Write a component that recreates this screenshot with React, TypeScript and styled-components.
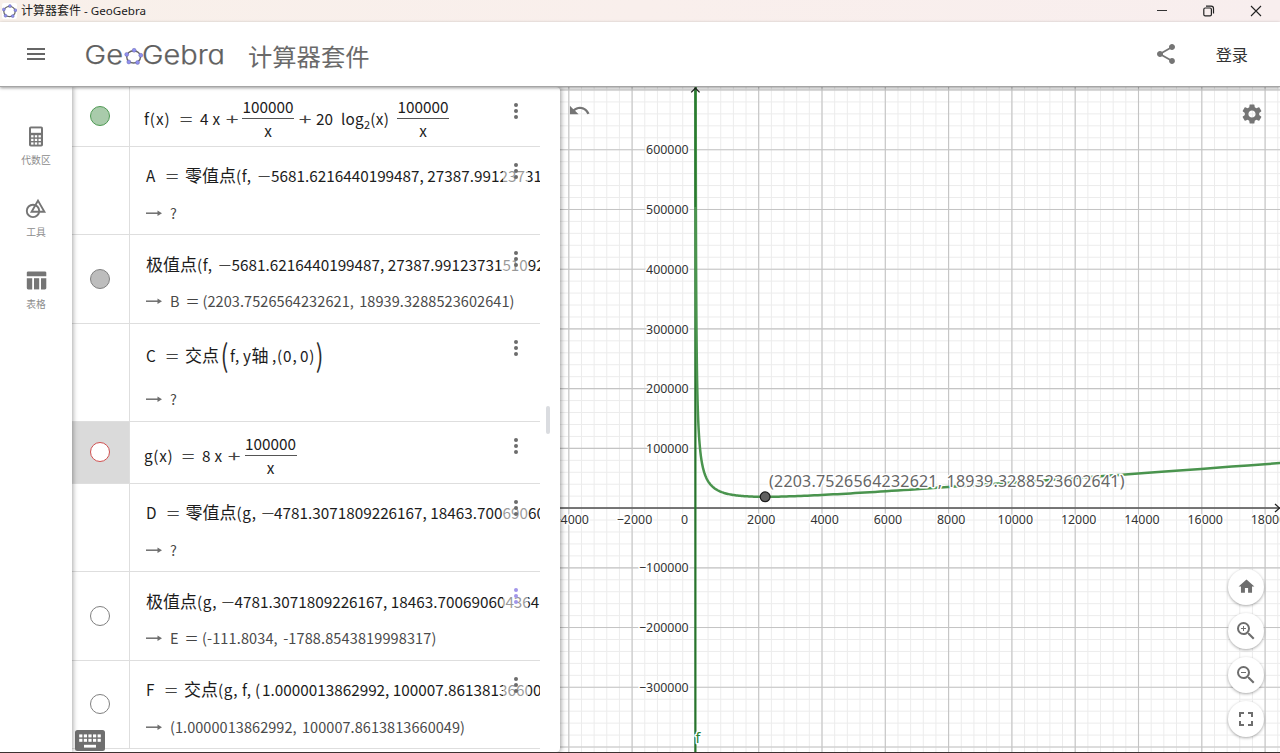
import React from "react";
import styled, { createGlobalStyle } from "styled-components";
import {
  MdFullscreen,
  MdHome,
  MdMenu,
  MdSettings,
  MdShare,
  MdUndo,
  MdZoomIn,
  MdZoomOut,
} from "react-icons/md";

const Global = createGlobalStyle`
  * { box-sizing: border-box; }
  html, body { margin: 0; padding: 0; overflow: hidden; background: #fff; }
`;

const UI = `"Noto Sans", "Noto Sans CJK SC", sans-serif`;
const MATH = `"Noto Sans CJK SC", "Noto Sans", sans-serif`;

const Window = styled.div`
  width: 1280px;
  height: 753px;
  display: flex;
  flex-direction: column;
  font-family: ${UI};
  background: #fff;
  overflow: hidden;
  border-bottom: 1px solid #3b3130;
`;

const TitleBar = styled.div`
  height: 22px;
  flex: none;
  display: flex;
  align-items: center;
  padding-left: 2px;
  background: linear-gradient(90deg, #f8f0ea, #f9efec 50%, #f8eeee);
  color: #1b1b1b;
`;

const AppIcon = styled.span`
  width: 15px;
  height: 16px;
  border-radius: 2px;
  background: #fff;
  display: flex;
  align-items: center;
  justify-content: center;
`;

const TitleText = styled.span`
  margin: 0 0 1px 4px;
  font-size: 11.6px;
  line-height: 16px;
`;

const TitleCjk = styled.span`
  font-family: "Noto Sans CJK SC", sans-serif;
  font-size: 12px;
`;

const WindowControls = styled.div`
  margin-left: auto;
  margin-right: 18px;
  display: flex;
  gap: 35px;
`;

const Header = styled.header`
  height: 65px;
  flex: none;
  display: flex;
  align-items: center;
  padding: 0 32px 0 24px;
  background: #fff;
  border-bottom: 1px solid #a5a5a5;
  box-shadow: 0 1px 3px rgba(0, 0, 0, 0.4);
  position: relative;
  z-index: 5;
  color: #666;
`;

const Logo = styled.svg`
  margin: 1px 0 0 37px;
`;

const LogoText = styled.text`
  font: 300 26px Inter, sans-serif;
  font-feature-settings: "cv11";
  fill: #606060;
  stroke: #606060;
  stroke-width: 0.25px;
`;

const Subtitle = styled.h1`
  margin: 4px 0 0 22px;
  font: 400 24.3px/32px "Noto Sans CJK SC", sans-serif;
  color: #6a6a6a;
`;

const ShareButton = styled.span`
  margin-left: auto;
  display: flex;
  color: #757575;
`;

const SignIn = styled.span`
  margin: 0 0 1px 38px;
  font: 400 16.2px/24px "Noto Sans CJK SC", sans-serif;
  color: #333;
`;

const Body = styled.div`
  flex: 1;
  min-height: 0;
  display: flex;
`;

const Nav = styled.nav`
  width: 72px;
  flex: none;
  padding-top: 35px;
  display: flex;
  flex-direction: column;
  position: relative;
  z-index: 3;
  background: #fff;
  box-shadow: 1px 0 5px rgba(0, 0, 0, 0.35);
`;

const NavItem = styled.div`
  height: 72px;
  display: flex;
  flex-direction: column;
  align-items: center;
  color: #757575;
`;

const NavIcon = styled.svg`
  margin-top: 2px;
  display: block;
`;

const NavLabel = styled.span`
  margin-top: 5px;
  font: 400 9.8px/14px "Noto Sans CJK SC", sans-serif;
  color: #8c8c8c;
`;

const Panel = styled.section`
  width: 488px;
  flex: none;
  display: flex;
  position: relative;
  z-index: 2;
  background: #fff;
  border-radius: 0 4px 4px 0;
  box-shadow: 1px 0 5px rgba(0, 0, 0, 0.4);
`;

const Rows = styled.div`
  width: 468px;
  overflow: hidden;
`;

const ScrollTrack = styled.div`
  flex: 1;
  padding: 319px 0 0 6px;
`;

const ScrollThumb = styled.div`
  width: 4px;
  height: 28px;
  border-radius: 2px;
  background: #dadce0;
`;

const Row = styled.div<{ $h: number }>`
  height: ${(p) => p.$h}px;
  display: flex;
  position: relative;
  border-bottom: 1px solid #dedede;
`;

const Gutter = styled.div<{ $active?: boolean }>`
  width: 58px;
  flex: none;
  display: flex;
  align-items: center;
  justify-content: center;
  padding: 0 2px 0 0;
  border-right: 1px solid #dedede;
  background: ${(p) => (p.$active ? "#dadada" : "transparent")};
`;

const Marble = styled.span<{ $fill: string; $line: string }>`
  width: 20px;
  height: 20px;
  margin-bottom: 1px;
  border-radius: 50%;
  border: 1px solid ${(p) => p.$line};
  background: ${(p) => p.$fill};
`;

const Content = styled.div<{ $top: number; $indent?: number }>`
  flex: 1;
  min-width: 0;
  overflow: hidden;
  padding: ${(p) => p.$top}px 0 0 ${(p) => p.$indent ?? 16}px;
`;

const Expression = styled.div<{ $h?: number }>`
  height: ${(p) => p.$h ?? 24}px;
  display: flex;
  align-items: center;
  white-space: nowrap;
  font: 400 15.3px/24px ${MATH};
  color: #1c1c1c;
`;

const Tok = styled.span<{ $w?: number; $ls?: number }>`
  flex: none;
  white-space: pre;
  width: ${(p) => (p.$w ? `${p.$w}px` : "auto")};
  letter-spacing: ${(p) => p.$ls ?? 0}px;
`;

const Op = styled.span<{ $w: number; $after?: number }>`
  flex: none;
  display: inline-flex;
  justify-content: center;
  width: ${(p) => p.$w}px;
  margin-right: ${(p) => p.$after ?? 0}px;
  transform: scaleX(1.5);
  color: #444;
`;

const Cjk = styled.span`
  flex: none;
  font-size: 17px;
`;

const BigParen = styled.span<{ $w: number }>`
  flex: none;
  width: ${(p) => p.$w}px;
  display: inline-flex;
  justify-content: center;
  font-size: 18px;
  line-height: 24px;
  transform: scale(1.25, 1.7);
  transform-origin: 50% 58%;
  color: #2c2c2c;
`;

const Sub = styled.sub`
  font-size: 11px;
  line-height: 0;
`;

const Fraction = styled.span`
  flex: none;
  width: 52px;
  display: flex;
  flex-direction: column;
  align-items: center;
  line-height: 23px;
`;

const Numerator = styled.span`
  width: 100%;
  height: 24px;
  text-align: center;
  border-bottom: 1px solid #555;
`;

const Denominator = styled.span`
  height: 23px;
`;

const Result = styled.div<{ $mt: number }>`
  margin-top: ${(p) => p.$mt}px;
  display: flex;
  align-items: center;
  white-space: pre;
  font: 400 14.5px/22px ${MATH};
  letter-spacing: 0.06px;
  word-spacing: 2px;
  color: #4a4a4a;
`;

const ArrowMark = styled.svg`
  flex: none;
  margin-right: 8px;
`;

const More = styled.span<{ $accent?: boolean; $veil?: boolean }>`
  position: absolute;
  top: 8px;
  right: 12px;
  width: 25px;
  height: 32px;
  display: flex;
  flex-direction: column;
  align-items: center;
  justify-content: center;
  gap: 2px;
  color: ${(p) => (p.$accent ? "#a296ea" : "#6c6c6c")};
  background: ${(p) => (p.$veil ? "rgba(255,255,255,0.55)" : "transparent")};
`;

const Dot = styled.i`
  width: 4px;
  height: 4px;
  border-radius: 50%;
  background: currentColor;
`;

const KeyboardButton = styled.span`
  position: absolute;
  left: 3px;
  bottom: 1px;
  display: flex;
`;

const GraphArea = styled.section`
  flex: 1;
  min-width: 0;
  position: relative;
`;

const Plot = styled.svg`
  display: block;
  font-family: ${UI};
`;

const UndoButton = styled.span`
  position: absolute;
  left: 8px;
  top: 12px;
  display: flex;
  color: #757575;
`;

const SettingsButton = styled.span`
  position: absolute;
  right: 16px;
  top: 15px;
  display: flex;
  color: #757575;
`;

const ZoomStack = styled.div`
  position: absolute;
  right: 16px;
  top: 481.5px;
  display: flex;
  flex-direction: column;
  gap: 8px;
`;

const Fab = styled.span`
  width: 36px;
  height: 36px;
  border-radius: 50%;
  background: #fff;
  display: flex;
  align-items: center;
  justify-content: center;
  color: #6e6e6e;
  box-shadow: 0 1px 3px rgba(0, 0, 0, 0.35);
`;

function Pentagon({ r, dot, stroke }: { r: number; dot: number; stroke: number }) {
  const pts = [-86, -14, 58, 130, 202].map((a) => {
    const t = (a * Math.PI) / 180;
    return [Math.cos(t) * r * 1.06, Math.sin(t) * r * 0.94];
  });
  return (
    <g>
      <ellipse rx={r * 0.98} ry={r * 0.88} fill="none" stroke="#666" strokeWidth={stroke} />
      {pts.map(([x, y], i) => (
        <circle key={i} cx={x} cy={y} r={dot} fill="#8f8ff0" stroke="#5a5a9a" strokeWidth={0.4} />
      ))}
    </g>
  );
}

function Arrow() {
  return (
    <ArrowMark width="16" height="8" viewBox="0 0 16 8">
      <path d="M0 4.2H13" stroke="#6e6e6e" strokeWidth="1.5" />
      <path d="M11.5 1.4L16 4.2L11.5 7Z" fill="#6e6e6e" />
    </ArrowMark>
  );
}

function Frac() {
  return (
    <Fraction>
      <Numerator>100000</Numerator>
      <Denominator>x</Denominator>
    </Fraction>
  );
}

type RowProps = {
  h: number;
  top: number;
  indent?: number;
  active?: boolean;
  marble?: [string, string];
  accent?: boolean;
  veil?: boolean;
  children: React.ReactNode;
};

function AlgebraRow({ h, top, indent, active, marble, accent, veil, children }: RowProps) {
  return (
    <Row $h={h}>
      <Gutter $active={active}>{marble && <Marble $fill={marble[0]} $line={marble[1]} />}</Gutter>
      <Content $top={top} $indent={indent}>
        {children}
      </Content>
      <More $accent={accent} $veil={veil}>
        <Dot />
        <Dot />
        <Dot />
      </More>
    </Row>
  );
}

/* Graph coordinates: the plot starts at the panel edge and below the header. */
const OX = 135.4;
const OY = 421.1;
const UX = 63.3 / 2000;
const UY = 59.73 / 100000;
const sx = (x: number) => OX + x * UX;
const sy = (y: number) => OY - y * UY;
const f = (x: number) => 4 * x + 100000 / x + (20 * Math.log2(x) * 100000) / x;

function curvePath() {
  const pts: string[] = [];
  for (let x = 5; x < 19500; x *= 1.03) pts.push(`${sx(x).toFixed(2)},${sy(f(x)).toFixed(2)}`);
  return `M${pts.join("L")}`;
}

const range = (a: number, b: number) => Array.from({ length: b - a + 1 }, (_, i) => a + i);

function Graph() {
  return (
    <Plot width="720" height="665" viewBox="0 0 720 665">
      <g stroke="#ececec" strokeWidth="1">
        {range(-10, 46).map((i) => (
          <path key={`v${i}`} d={`M${sx(i * 400)} 0V665`} />
        ))}
        {range(-20, 35).map((i) => (
          <path key={`h${i}`} d={`M0 ${sy(i * 20000)}H720`} />
        ))}
      </g>
      <g stroke="#c4c4c4" strokeWidth="1.1">
        {range(-2, 9).map((i) => (
          <path key={`v${i}`} d={`M${sx(i * 2000)} 0V665`} />
        ))}
        {range(-4, 7).map((i) => (
          <path key={`h${i}`} d={`M0 ${sy(i * 100000)}H720`} />
        ))}
      </g>
      <path d={`M0 ${OY}H720`} stroke="#555" strokeWidth="1.5" />
      <path d={`M715 ${OY - 4}L719.5 ${OY}L715 ${OY + 4}`} fill="none" stroke="#222" strokeWidth="1.3" />
      <path d={`M${OX} 2V665`} stroke="#222" strokeWidth="1.2" />
      <path d={`M${OX} 1V665`} stroke="#2a8030" strokeWidth="2.4" strokeOpacity="0.85" />
      <path d={curvePath()} fill="none" stroke="#4a944e" strokeWidth="2.5" />
      <path d={`M${OX} 1V120`} stroke="#2a7a30" strokeWidth="1.6" />
      <path d={`M${OX - 4.2} 5.4L${OX} 1.2L${OX + 4.2} 5.4`} fill="none" stroke="#222" strokeWidth="1.3" />
      <g fontSize="12.4" fill="#333" stroke="#fff" strokeWidth="3" paintOrder="stroke" strokeLinejoin="round">
        {range(-2, 9)
          .filter((i) => i !== 0)
          .map((i) => (
            <text key={i} x={sx(i * 2000) + (i < 0 ? 2.4 : i > 4 ? 3.4 : 2.6)} y="436.6" textAnchor="middle">
              {i < 0 ? `−${-i * 2000}` : i * 2000}
            </text>
          ))}
        <text x="124.5" y="436.6" textAnchor="middle">
          0
        </text>
        {[6, 5, 4, 3, 2, 1, -1, -2, -3].map((i) => (
          <text key={i} x="128.6" y={sy(i * 100000) + 4.6} textAnchor="end">
            {i < 0 ? `−${-i * 100000}` : i * 100000}
          </text>
        ))}
        <text x="135.5" y="656" fontSize="14" fill="#2a8030">
          f
        </text>
      </g>
      <text
        x="209"
        y="399.6"
        fontSize="16"
        textLength="355.5"
        fill="#666"
        stroke="#fff"
        strokeWidth="3"
        paintOrder="stroke"
        strokeLinejoin="round"
      >
        (2203.7526564232621, 18939.3288523602641)
      </text>
      <circle cx={sx(2203.75)} cy={sy(18939)} r="4.9" fill="#616161" stroke="#1c1c1c" strokeWidth="1.2" />
    </Plot>
  );
}

export default function App() {
  return (
    <Window>
      <Global />
      <TitleBar>
        <AppIcon>
          <svg width="15" height="15" viewBox="-7.5 -7.5 15 15">
            <Pentagon r={5.8} dot={1.5} stroke={1.2} />
          </svg>
        </AppIcon>
        <TitleText>
          <TitleCjk>计算器套件</TitleCjk> - GeoGebra
        </TitleText>
        <WindowControls>
          <svg width="12" height="12" viewBox="0 0 12 12">
            <path d="M1 5.5H11" stroke="#333" strokeWidth="1" />
          </svg>
          <svg width="12" height="12" viewBox="0 0 12 12" fill="none" stroke="#222" strokeWidth="1.2">
            <rect x="0.8" y="3" width="7.6" height="7.8" rx="1.4" />
            <path d="M3 1.2H8.2A2.3 2.3 0 0 1 10.5 3.5V8.6" />
          </svg>
          <svg width="12" height="12" viewBox="0 0 12 12">
            <path d="M1 1L11 11M11 1L1 11" stroke="#222" strokeWidth="1.1" />
          </svg>
        </WindowControls>
      </TitleBar>

      <Header>
        <MdMenu size={24} />
        <Logo width="141" height="34" viewBox="0 0 141 34">
          <LogoText x="-0.5" y="26" textLength="38.5" lengthAdjust="spacingAndGlyphs">
            Ge
          </LogoText>
          <LogoText x="57" y="26" textLength="83" lengthAdjust="spacingAndGlyphs">
            Gebra
          </LogoText>
          <g transform="translate(48.6 18.9)">
            <Pentagon r={7} dot={2} stroke={1.4} />
          </g>
        </Logo>
        <Subtitle>计算器套件</Subtitle>
        <ShareButton>
          <MdShare size={24} />
        </ShareButton>
        <SignIn>登录</SignIn>
      </Header>

      <Body>
        <Nav>
          <NavItem>
            <NavIcon width="24" height="24" viewBox="0 0 24 24">
              <rect x="5" y="2.5" width="14" height="20" rx="1.8" fill="#757575" />
              <rect x="7" y="4.4" width="10" height="4.4" fill="#fff" />
              {[11.2, 14.8, 18.4].map((y) =>
                [7.1, 10.8, 14.5].map((x) => (
                  <rect key={`${x}-${y}`} x={x} y={y} width="2.4" height="2.2" fill="#fff" />
                ))
              )}
            </NavIcon>
            <NavLabel>代数区</NavLabel>
          </NavItem>
          <NavItem>
            <NavIcon width="24" height="24" viewBox="0 0 24 24" fill="none" stroke="#757575" strokeWidth="1.9">
              <circle cx="9" cy="14.9" r="6.2" />
              <path d="M14 4.6L20.4 15.8H7.6Z" />
            </NavIcon>
            <NavLabel>工具</NavLabel>
          </NavItem>
          <NavItem>
            <NavIcon width="24" height="24" viewBox="0 0 24 24" fill="#757575">
              <path d="M4.2 3.4H20.9Q22.3 3.4 22.3 4.8V8.2H2.8V4.8Q2.8 3.4 4.2 3.4Z" />
              <path d="M2.8 10.2H8.2V21.4H4.2Q2.8 21.4 2.8 20Z" />
              <rect x="10" y="10.2" width="5.2" height="11.2" />
              <path d="M17 10.2H22.3V20Q22.3 21.4 20.9 21.4H17Z" />
            </NavIcon>
            <NavLabel>表格</NavLabel>
          </NavItem>
        </Nav>

        <Panel>
          <Rows>
            <AlgebraRow h={60} top={7} indent={14} marble={["#a9cbab", "#4f9a54"]}>
              <Expression $h={48}>
                <Tok $w={30.5} $ls={0.9}>f(x)</Tok>
                <Op $w={22} $after={3.5}>=</Op>
                <Tok $w={12.5}>4</Tok>
                <Tok $w={12}>x</Tok>
                <Op $w={14} $after={3.5}>+</Op>
                <Frac />
                <Op $w={22}>+</Op>
                <Tok $w={25}>20</Tok>
                <Tok $w={56} $ls={0.25}>
                  log<Sub>2</Sub>(x)
                </Tok>
                <Frac />
              </Expression>
            </AlgebraRow>

            <AlgebraRow h={88} top={16} veil>
              <Expression>
                <Tok $w={14.5}>A</Tok>
                <Op $w={22} $after={2.5}>=</Op>
                <Cjk>零值点</Cjk>
                <Tok $w={21} $ls={0.7}>(f,</Tok>
                <Op $w={14}>−</Op>
                <Tok>5681.6216440199487, 27387.99123731510926</Tok>
              </Expression>
              <Result $mt={15}>
                <Arrow />
                <span>?</span>
              </Result>
            </AlgebraRow>

            <AlgebraRow h={89} top={17} marble={["#bdbdbd", "#808080"]} veil>
              <Expression>
                <Cjk>极值点</Cjk>
                <Tok $w={21} $ls={0.7}>(f,</Tok>
                <Op $w={13.5}>−</Op>
                <Tok>5681.6216440199487, 27387.99123731510926</Tok>
              </Expression>
              <Result $mt={14}>
                <Arrow />
                <Tok $w={13.5}>B</Tok>
                <Op $w={17} $after={2}>=</Op>
                <Tok $ls={0.08}>(2203.7526564232621, 18939.3288523602641)</Tok>
              </Result>
            </AlgebraRow>

            <AlgebraRow h={98} top={16}>
              <Expression $h={30}>
                <Tok $w={14.5}>C</Tok>
                <Op $w={22} $after={2.5}>=</Op>
                <Cjk>交点</Cjk>
                <BigParen $w={11}>(</BigParen>
                <Tok $w={13} $ls={1}>f,</Tok>
                <Tok $w={8.5}>y</Tok>
                <Cjk>轴</Cjk>
                <Tok $w={8.5} $ls={0}> ,</Tok>
                <Tok $w={15.5} $ls={0.8}>(0</Tok>
                <Tok $w={7.5}>,</Tok>
                <Tok $w={15} $ls={0.8}>0)</Tok>
                <BigParen $w={9}>)</BigParen>
              </Expression>
              <Result $mt={18}>
                <Arrow />
                <span>?</span>
              </Result>
            </AlgebraRow>

            <AlgebraRow h={62} top={9} indent={14} active marble={["#ffffff", "#d05050"]}>
              <Expression $h={48}>
                <Tok $w={33} $ls={0.7}>g(x)</Tok>
                <Op $w={22} $after={3}>=</Op>
                <Tok $w={12.5}>8</Tok>
                <Tok $w={12}>x</Tok>
                <Op $w={14} $after={4}>+</Op>
                <Frac />
              </Expression>
            </AlgebraRow>

            <AlgebraRow h={88} top={16} veil>
              <Expression>
                <Tok $w={15.5}>D</Tok>
                <Op $w={22} $after={2}>=</Op>
                <Cjk>零值点</Cjk>
                <Tok $w={24} $ls={0.7}>(g,</Tok>
                <Op $w={13.5}>−</Op>
                <Tok>4781.3071809226167, 18463.70069060436419</Tok>
              </Expression>
              <Result $mt={15}>
                <Arrow />
                <span>?</span>
              </Result>
            </AlgebraRow>

            <AlgebraRow h={89} top={17} marble={["#ffffff", "#808080"]} accent veil>
              <Expression>
                <Cjk>极值点</Cjk>
                <Tok $w={24} $ls={0.7}>(g,</Tok>
                <Op $w={13.5}>−</Op>
                <Tok>4781.3071809226167, 18463.70069060436419</Tok>
              </Expression>
              <Result $mt={14}>
                <Arrow />
                <Tok $w={13}>E</Tok>
                <Op $w={17} $after={2}>=</Op>
                <Tok $ls={0.13}>(-111.8034, -1788.8543819998317)</Tok>
              </Result>
            </AlgebraRow>

            <AlgebraRow h={88} top={16} marble={["#ffffff", "#808080"]} veil>
              <Expression>
                <Tok $w={13.5}>F</Tok>
                <Op $w={22} $after={2.5}>=</Op>
                <Cjk>交点</Cjk>
                <Tok $w={24} $ls={0.7}>(g,</Tok>
                <Tok $w={13} $ls={0.7}>f,</Tok>
                <Tok $w={7}>(</Tok>
                <Tok>1.0000013862992, 100007.8613813660049</Tok>
              </Expression>
              <Result $mt={15}>
                <Arrow />
                <span>(1.0000013862992, 100007.8613813660049)</span>
              </Result>
            </AlgebraRow>
          </Rows>
          <ScrollTrack>
            <ScrollThumb />
          </ScrollTrack>
          <KeyboardButton>
            <svg width="30" height="21" viewBox="0 0 30 21">
              <rect width="30" height="21" rx="2.5" fill="#6f6f6f" />
              {[4.4, 8.8].map((y) =>
                [4.2, 8.8, 13.4, 18, 22.6].map((x) => (
                  <rect key={`${x}-${y}`} x={x} y={y} width="3.2" height="3" fill="#fff" />
                ))
              )}
              <rect x="9" y="14.8" width="12" height="2.8" fill="#fff" />
            </svg>
          </KeyboardButton>
        </Panel>

        <GraphArea>
          <Graph />
          <UndoButton>
            <MdUndo size={23} />
          </UndoButton>
          <SettingsButton>
            <MdSettings size={24} />
          </SettingsButton>
          <ZoomStack>
            <Fab>
              <MdHome size={19} />
            </Fab>
            <Fab>
              <MdZoomIn size={24} />
            </Fab>
            <Fab>
              <MdZoomOut size={24} />
            </Fab>
            <Fab>
              <MdFullscreen size={24} />
            </Fab>
          </ZoomStack>
        </GraphArea>
      </Body>
    </Window>
  );
}
